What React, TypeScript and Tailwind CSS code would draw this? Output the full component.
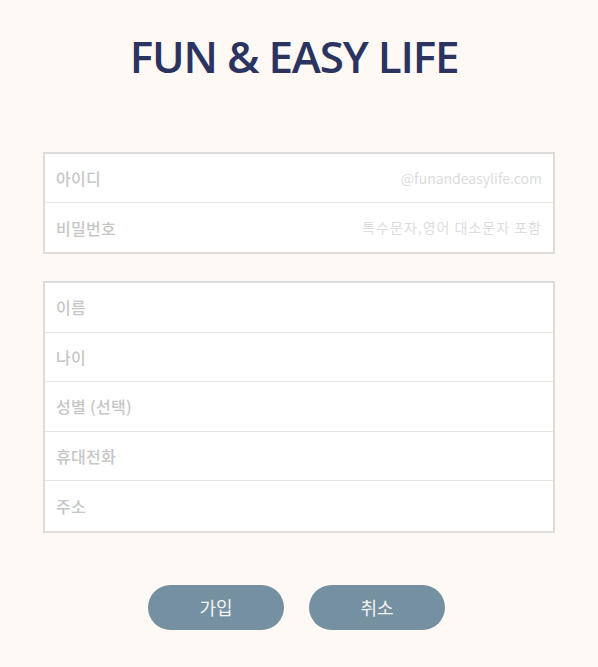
import React from "react";

const kr = { fontFamily: '"Noto Sans CJK KR", "Noto Sans", sans-serif' };

function Row({ label, hint, last, tall }: { label: string; hint?: string; last?: boolean; tall?: boolean }) {
  return (
    <div
      className={`flex items-center justify-between px-[11px] ${tall ? "h-[49.5px]" : "h-[49px]"} ${
        last ? "" : "border-b border-[#e6e6e6]"
      }`}
    >
      <span className="text-[16px] font-medium tracking-[0.3px] text-[#c6c6c6]">{label}</span>
      {hint && <span className="text-[14px] text-[#dcdcdc]">{hint}</span>}
    </div>
  );
}

export default function App() {
  return (
    <div className="min-h-[667px] w-full bg-[#fff9f5] pt-[26px]" style={kr}>
      <h1
        className="pr-[10px] text-center text-[44px] font-semibold leading-[60px] tracking-[-1.2px] text-[#2b3461]"
        style={{ fontFamily: '"Open Sans", "Noto Sans", sans-serif' }}
      >
        FUN &amp; EASY LIFE
      </h1>

      <div className="mx-auto mt-[66px] w-[512px] border-2 border-[#dcdcdc] bg-white">
        <Row label="아이디" hint="@funandeasylife.com" />
        <div className="flex h-[49px] items-center justify-between px-[11px]">
          <span className="text-[16px] font-medium tracking-[0.3px] text-[#c6c6c6]">비밀번호</span>
          <span className="text-[14px] tracking-[1px] text-[#dcdcdc]">특수문자,영어 대소문자 포함</span>
        </div>
      </div>

      <div className="mx-auto mt-[27px] w-[512px] border-2 border-[#dcdcdc] bg-white">
        <Row label="이름" tall />
        <Row label="나이" tall />
        <Row label="성별 (선택)" tall />
        <Row label="휴대전화" tall />
        <Row label="주소" tall last />
      </div>

      <div className="mt-[52px] flex justify-center gap-[25px] pr-[5px]">
        <button className="h-[45px] w-[136px] rounded-full bg-[#7590a0] text-[18px] text-[#f3f3f3]">가입</button>
        <button className="h-[45px] w-[136px] rounded-full bg-[#7590a0] text-[18px] text-[#f3f3f3]">취소</button>
      </div>
    </div>
  );
}
